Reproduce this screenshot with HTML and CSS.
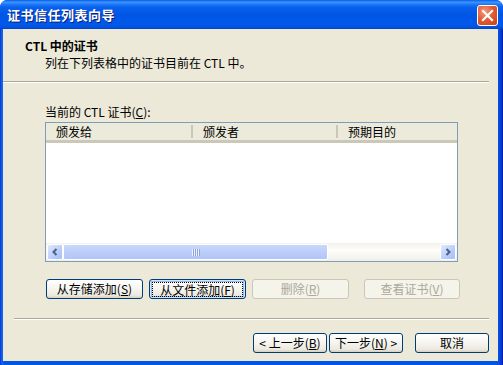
FILE: index.html
```html
<!DOCTYPE html>
<html lang="zh-CN">
<head>
  <meta charset="UTF-8">
  <title>证书信任列表向导</title>
  <link rel="stylesheet" href="styles.css">
</head>
<body>
  <div class="window">
    <div class="titlebar">
      <span class="title">证书信任列表向导</span>
      <button class="close-btn">
        <svg width="13" height="13" viewBox="0 0 13 13"><path d="M2 2 L11 11 M11 2 L2 11" stroke="#fff" stroke-width="2.2" stroke-linecap="square"/></svg>
      </button>
    </div>

    <div class="panel">
      <div class="header">
        <div class="head-title">CTL 中的证书</div>
        <div class="head-sub">列在下列表格中的证书目前在 CTL 中。</div>
      </div>
      <div class="sep sep-top"></div>

      <div class="content">
        <div class="list-label">当前的 CTL 证书(<u>C</u>):</div>
        <div class="listview">
          <div class="list-head">
            <div class="col col-1">颁发给</div>
            <div class="col col-2">颁发者</div>
            <div class="col col-3">预期目的</div>
          </div>
          <div class="list-rows"></div>
          <div class="hscroll">
            <div class="sb-btn">
              <svg width="8" height="8" viewBox="0 0 8 8"><path d="M5.5 1 L2.5 4 L5.5 7" fill="none" stroke="#4d6185" stroke-width="2"/></svg>
            </div>
            <div class="sb-thumb">
              <svg width="8" height="7" viewBox="0 0 8 7"><path d="M0.5 0 V7 M2.5 0 V7 M4.5 0 V7 M6.5 0 V7" stroke="#eef2fd" stroke-width="1"/><path d="M1.5 0 V7 M3.5 0 V7 M5.5 0 V7 M7.5 0 V7" stroke="#8ca3e0" stroke-width="1"/></svg>
            </div>
            <div class="sb-track"></div>
            <div class="sb-btn">
              <svg width="8" height="8" viewBox="0 0 8 8"><path d="M2.5 1 L5.5 4 L2.5 7" fill="none" stroke="#4d6185" stroke-width="2"/></svg>
            </div>
          </div>
        </div>

        <div class="btn-row">
          <button class="btn">从存储添加(<u>S</u>)</button>
          <button class="btn focus"><span>从文件添加(<u>F</u>)</span></button>
          <button class="btn" disabled>删除(<u>R</u>)</button>
          <button class="btn wide-gap" disabled>查看证书(<u>V</u>)</button>
        </div>
      </div>

      <div class="sep sep-bottom"></div>

      <div class="footer">
        <button class="btn nav">&lt; 上一步(<u>B</u>)</button>
        <button class="btn nav">下一步(<u>N</u>) &gt;</button>
        <button class="btn nav cancel">取消</button>
      </div>
    </div>
  </div>
</body>
</html>
```

FILE: styles.css
```css
* { box-sizing: border-box; }

body {
  margin: 0;
  font-family: "Noto Sans CJK SC", "DejaVu Sans", sans-serif;
  font-size: 12px;
  color: #000;
  background: #fff;
}

.window {
  width: 503px;
  height: 365px;
  display: flex;
  flex-direction: column;
  background: linear-gradient(to right, #0831d9 0, #166aee 2px, #0055e5 4px, #0055e5 calc(100% - 5px), #0a3ad3 calc(100% - 2px), #001ea0 100%);
  border-radius: 7px 7px 0 0;
  overflow: hidden;
}

.titlebar {
  height: 29px;
  display: flex;
  align-items: center;
  padding: 0 5px 0 7px;
  background: linear-gradient(#0a5ee9 0%, #3d94fd 8%, #1f7cf7 14%, #0a61ef 24%, #0055e5 50%, #0058ea 85%, #0252de 94%, #0040cf 100%);
  border-radius: 7px 7px 0 0;
}

.title {
  flex-grow: 1;
  color: #fff;
  font-weight: bold;
  font-size: 13px;
  letter-spacing: 0.5px;
  text-shadow: 1px 1px 0 #0a1e7a;
}

.close-btn {
  width: 21px;
  height: 21px;
  margin-top: 1px;
  padding: 0;
  border: 1px solid #fff;
  border-radius: 3px;
  background: radial-gradient(circle at 35% 30%, #f59c7e 0%, #e45c34 45%, #c8401b 100%);
  display: flex;
  align-items: center;
  justify-content: center;
}

.panel {
  flex: 1;
  margin: 0 5px 4px 3px;
  background: #ece9d8;
  display: flex;
  flex-direction: column;
}

.header {
  height: 52px;
  padding: 10px 0 0 22px;
}

.head-title {
  font-weight: bold;
  line-height: 14px;
  height: 17px;
}

.head-sub {
  padding-left: 20px;
  line-height: 14px;
}

.sep {
  height: 2px;
  border-top: 1px solid #aca899;
  border-bottom: 1px solid #fff;
}

.sep-top { margin-right: 9px; }

.content {
  flex: 1;
  padding: 22px 0 0 42px;
}

.list-label {
  line-height: 14px;
  height: 17px;
}

.listview {
  width: 413px;
  height: 140px;
  border: 1px solid #7f9db9;
  background: #fff;
  display: flex;
  flex-direction: column;
}

.list-head {
  height: 20px;
  display: flex;
  background: #ebeadb;
  border-bottom: 3px solid;
  border-image: linear-gradient(#e2decd, #d6d2c2 50%, #cbc7b8) 1;
}

.col {
  padding-left: 10px;
  line-height: 17px;
}

.col-1 { width: 145px; }
.col-2 { width: 145px; border-left: 2px solid; border-image: linear-gradient(#ebeadb 3px, #cac7b8 3px, #cac7b8 14px, #ebeadb 14px) 1; }
.col-3 { flex: 1; border-left: 2px solid; border-image: linear-gradient(#ebeadb 3px, #cac7b8 3px, #cac7b8 14px, #ebeadb 14px) 1; }

.list-rows { flex: 1; }

.hscroll {
  height: 18px;
  display: flex;
  padding: 1px 1px 1px 1px;
  background: linear-gradient(#f3f1ec, #fefefb 40%, #f0efe7);
}

.sb-btn {
  width: 16px;
  height: 16px;
  border: 1px solid #fff;
  border-radius: 2px;
  background: linear-gradient(135deg, #e0e9fd, #b9cdfb 60%, #a7bef5);
  display: flex;
  align-items: center;
  justify-content: center;
}

.sb-thumb {
  width: 265px;
  height: 16px;
  border: 1px solid #fff;
  border-radius: 2px;
  background: linear-gradient(#c9d8fc, #bccdf9 50%, #b1c5f6);
  display: flex;
  align-items: center;
  justify-content: center;
}

.sb-track { flex: 1; }

.btn-row {
  display: flex;
  gap: 6px;
  margin-top: 17px;
  padding-left: 1px;
}

.btn {
  font-family: "Noto Sans CJK SC", "DejaVu Sans", sans-serif;
  font-size: 12px;
  width: 97px;
  height: 20px;
  padding: 0;
  line-height: 16px;
  border: 1px solid #003c74;
  border-radius: 3px;
  background: linear-gradient(#fff 0%, #f5f4ef 50%, #ece9e0 85%, #d6d0c5 100%);
  color: #000;
}

.btn u { text-decoration: underline; }

.btn.focus {
  box-shadow: inset 0 0 0 1px #cee7ff, inset 0 0 0 2px #98b8ea;
  padding: 2px;
}

.btn.focus span {
  display: block;
  border: 1px dotted #000;
  line-height: 13px;
}

.btn:disabled {
  border-color: #c9c7ba;
  background: #f5f4ea;
  color: #aca899;
}

.btn.wide-gap { margin-left: 9px; width: 96px; }

.sep-bottom { margin: 0 9px 0 11px; }

.footer {
  height: 41px;
  display: flex;
  justify-content: flex-end;
  align-items: flex-start;
  gap: 2px;
  padding: 13px 9px 0 0;
}

.btn.nav { width: 74px; }
.btn.cancel { margin-left: 10px; }
```
